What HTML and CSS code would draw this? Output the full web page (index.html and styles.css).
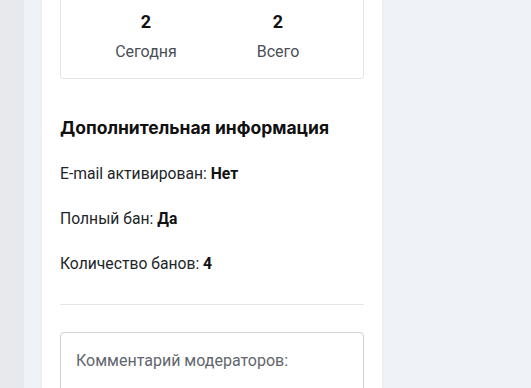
FILE: index.html
```html
<!DOCTYPE html>
<html lang="ru">
<head>
    <meta charset="UTF-8">
    <meta name="viewport" content="width=device-width, initial-scale=1.0">
    <title>Профиль пользователя</title>
    <link rel="stylesheet" href="styles.css">
</head>
<body>
    <div class="layout">
        <!-- left menu strip -->
        <aside class="sidebar"></aside>

        <main class="content">
            <div class="profile-card">
                <!-- stats -->
                <div class="stats-box">
                    <div class="stat">
                        <div class="stat-value">2</div>
                        <div class="stat-label">Сегодня</div>
                    </div>
                    <div class="stat">
                        <div class="stat-value">2</div>
                        <div class="stat-label">Всего</div>
                    </div>
                </div>

                <h3 class="section-title">Дополнительная информация</h3>
                <p class="info-line">E-mail активирован: <b>Нет</b></p>
                <p class="info-line">Полный бан: <b>Да</b></p>
                <p class="info-line">Количество банов: <b>4</b></p>

                <hr class="divider">

                <div class="comment-box">
                    <div class="comment-title">Комментарий модераторов:</div>
                </div>
            </div>
        </main>
    </div>
</body>
</html>
```

FILE: styles.css
```css
html,
body {
    margin: 0;
    height: 100%;
    overflow: hidden;
}

body {
    background-color: #f0f3f7;
    color: #212529;
    font-family: 'Roboto', 'Liberation Sans', sans-serif;
}

.layout {
    display: flex;
    min-height: 100%;
}

.sidebar {
    width: 24px;
    flex-shrink: 0;
    background-color: #e8e9ec;
}

.content {
    flex: 1;
    padding-left: 18px;
    background-color: #eff2f6;
}

.profile-card {
    width: 304px;
    min-height: 420px;
    padding: 0 18px 20px;
    background-color: #ffffff;
    box-shadow: 0 0 2px rgba(0, 0, 0, 0.08);
}

.stats-box {
    display: grid;
    grid-template-columns: 132px 132px;
    justify-content: center;
    margin-top: -12px;
    padding: 22px 0 14px;
    border: 1px solid #e3e6ea;
    border-radius: 0 0 3px 3px;
    text-align: center;
}

.stat-value {
    font-size: 18px;
    font-weight: bold;
    line-height: 22px;
    color: #111111;
}

.stat-label {
    margin-top: 7px;
    font-size: 16px;
    line-height: 24px;
    color: #4a5058;
}

.section-title {
    margin: 39px 0 24px;
    font-family: 'Inter', 'Roboto', sans-serif;
    font-size: 17.5px;
    font-weight: 700;
    line-height: 20px;
    color: #111111;
}

.info-line {
    margin: 0 0 20.8px;
    font-size: 15.7px;
    line-height: 24px;
}

.info-line b {
    font-weight: 700;
    color: #111111;
}

.divider {
    margin: 28.5px 0 27px;
    border: none;
    border-top: 1px solid #e3e6ea;
}

.comment-box {
    min-height: 80px;
    padding: 16px 15px;
    border: 1px solid #ced4da;
    border-radius: 4px;
}

.comment-title {
    font-size: 16px;
    line-height: 24px;
    color: #5f666d;
}
```
